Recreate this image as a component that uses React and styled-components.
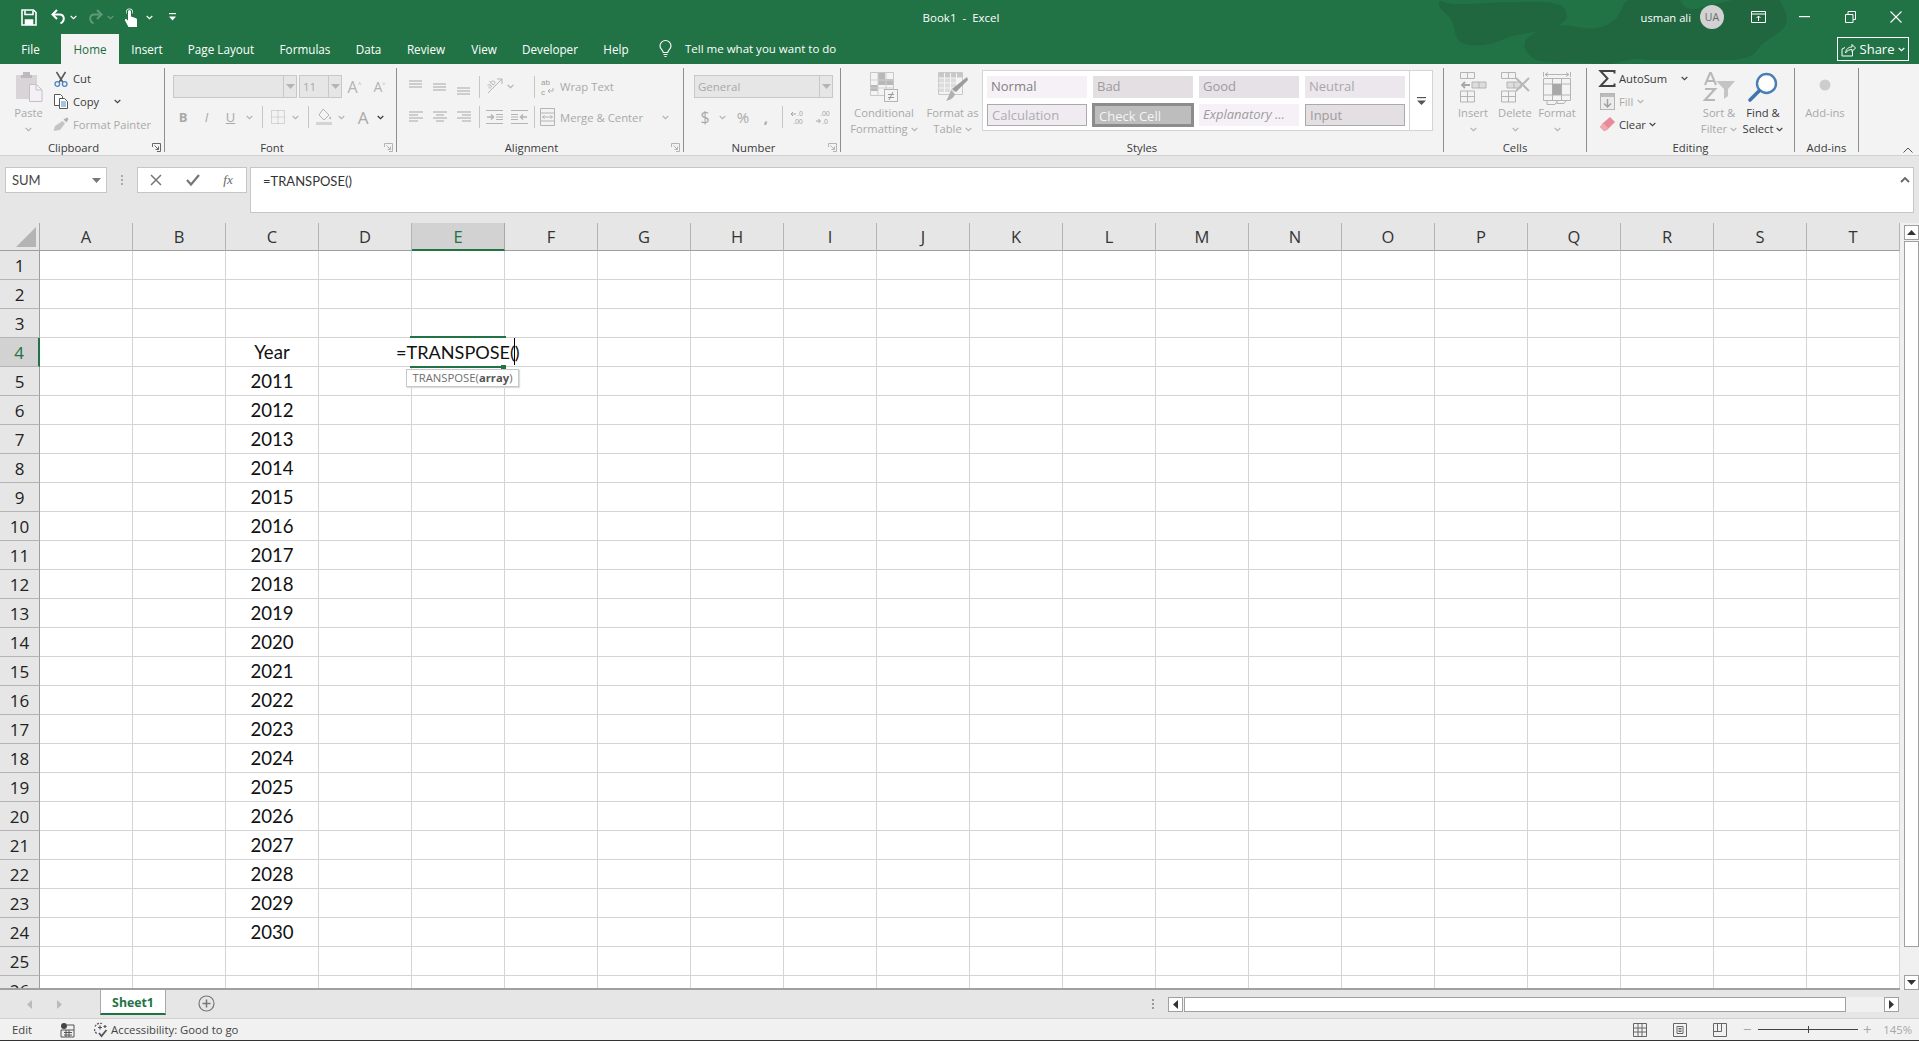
import React from 'react'
import styled, { createGlobalStyle } from 'styled-components'

const GREEN = '#217346'
const DIM = '#b4b4b4'
const DIMTEXT = '#a9a9a9'
const DARK = '#3a3a3a'

const COLUMNS = 'ABCDEFGHIJKLMNOPQRST'.split('')
const ROWS = Array.from({ length: 26 }, (_, i) => i + 1)
const TABS = [
  ['File', 61], ['Home', 58], ['Insert', 56], ['Page Layout', 92], ['Formulas', 76],
  ['Data', 51], ['Review', 64], ['View', 52], ['Developer', 80], ['Help', 52],
]

const cellText = (col, row) => {
  if (col !== 'C') return ''
  if (row === 4) return 'Year'
  if (row >= 5 && row <= 24) return String(2006 + row)
  return ''
}

const Global = createGlobalStyle`
  html, body { margin: 0; padding: 0; background: #fff; }
  * { box-sizing: border-box; }
  body { font-family: "Open Sans", "Noto Sans", sans-serif; overflow: hidden; }
  svg { overflow: visible; }
`

const Window = styled.div`
  width: 1919px;
  height: 1041px;
  display: flex;
  flex-direction: column;
  overflow: hidden;
  background: #e6e6e6;
`

/* title bar + tabs */
const Header = styled.header`
  position: relative;
  height: 64px;
  background: ${GREEN};
  color: #fff;
`
const Blobs = styled.svg`
  position: absolute;
  left: 1430px;
  top: 0;
`
const TitleRow = styled.div`
  position: relative;
  height: 34px;
  display: grid;
  grid-template-columns: 1fr auto 1fr;
  align-items: center;
`
const Quick = styled.div`
  display: flex;
  align-items: center;
  padding-left: 21px;
  height: 100%;
`
const BookName = styled.div`
  font-size: 11.5px;
  padding-left: 3px;
`
const Account = styled.div`
  display: flex;
  align-items: center;
  justify-content: flex-end;
  height: 100%;
`
const UserName = styled.span`
  font-size: 11.2px;
  margin-right: 9px;
`
const Avatar = styled.span`
  width: 24px;
  height: 24px;
  border-radius: 50%;
  background: #d2d2d2;
  color: #6a6a6a;
  font-size: 10.5px;
  display: flex;
  align-items: center;
  justify-content: center;
  margin-right: 11px;
`
const Slot = styled.span`
  display: inline-flex;
  align-items: center;
  justify-content: center;
  flex: none;
  width: ${p => p.$w}px;
  margin-left: ${p => p.$ml || 0}px;
  height: 100%;
  color: ${p => p.$c || DIMTEXT};
  font-size: ${p => p.$fs || 12}px;
  font-weight: ${p => p.$fw || 400};
  font-style: ${p => p.$fi ? 'italic' : 'normal'};
  text-decoration: ${p => p.$u ? 'underline' : 'none'};
`
const TabRow = styled.nav`
  position: relative;
  height: 30px;
  display: flex;
  align-items: stretch;
`
const Tab = styled.a`
  width: ${p => p.$w}px;
  display: flex;
  align-items: center;
  justify-content: center;
  font-size: 11.7px;
  padding-bottom: 1px;
  color: ${p => p.$active ? '#1e6b41' : '#fff'};
  background: ${p => p.$active ? '#f3f3f3' : 'transparent'};
`
const TellMe = styled.div`
  display: flex;
  align-items: center;
  margin-left: 17px;
  gap: 13px;
  font-size: 11.5px;
  padding-bottom: 1px;
`
const ShareButton = styled.button`
  position: absolute;
  right: 10px;
  top: 3px;
  width: 72px;
  height: 24px;
  background: transparent;
  border: 1px solid #fff;
  color: #fff;
  font: 13px "Open Sans", sans-serif;
  display: flex;
  align-items: center;
  justify-content: center;
  gap: 4px;
  padding: 0;
`

/* ribbon */
const Ribbon = styled.div`
  position: relative;
  height: 92px;
  padding-top: 4px;
  background: #f3f3f3;
  border-bottom: 1px solid #d2d2d2;
  display: flex;
`
const Group = styled.section`
  position: relative;
  width: ${p => p.$w}px;
  height: 84px;
  flex: none;
  border-right: 1px solid #8f8f8f;
  display: flex;
  flex-direction: column;
`
const GroupBody = styled.div`
  height: 74px;
  flex: none;
  display: flex;
  flex-direction: ${p => p.$col ? 'column' : 'row'};
  padding-left: ${p => p.$pl || 0}px;
`
const GroupLabel = styled.div`
  height: 10px;
  line-height: 12px;
  text-align: center;
  font-size: 11.3px;
  color: #3a3a3a;
  padding-right: ${p => p.$launcher ? 17 : 0}px;
`
const Launcher = styled.svg`
  position: absolute;
  right: 3px;
  bottom: 0;
`
const LargeButton = styled.div`
  width: ${p => p.$w}px;
  flex: none;
  display: flex;
  flex-direction: column;
  align-items: center;
  padding-top: 4px;
  color: ${p => p.$on ? DARK : DIMTEXT};
  font-size: 11.2px;
`
const LargeIcon = styled.div`
  height: 33px;
  display: flex;
  align-items: flex-start;
  padding-top: ${p => p.$pt || 0}px;
`
const LargeLine = styled.div`
  height: 16px;
  line-height: 16px;
  white-space: nowrap;
  display: flex;
  align-items: center;
  gap: 3px;
`
const SmallStack = styled.div`
  width: ${p => p.$w}px;
  flex: none;
  display: flex;
  flex-direction: column;
  margin-top: -1px;
`
const SmallRow = styled.div`
  height: 23px;
  display: flex;
  align-items: center;
  color: ${p => p.$on ? DARK : DIMTEXT};
  font-size: 11.2px;
`
const SmallIcon = styled.span`
  width: ${p => p.$w || 18}px;
  flex: none;
  display: inline-flex;
  justify-content: center;
  margin-right: 3px;
`
const ToolRow = styled.div`
  height: ${p => p.$h || 23}px;
  margin-top: 7px;
  display: flex;
  align-items: center;
`
const ComboBox = styled.div`
  width: ${p => p.$w}px;
  margin-left: ${p => p.$ml || 0}px;
  height: 23px;
  flex: none;
  background: #e6e6e6;
  border: 1px solid #c8c8c8;
  display: flex;
  align-items: center;
  justify-content: space-between;
  color: ${DIMTEXT};
  font-size: 11.5px;
  padding-left: 3px;
`
const ComboArrow = styled.span`
  width: 13px;
  height: 100%;
  border-left: 1px solid #c8c8c8;
  display: flex;
  align-items: center;
  justify-content: center;
`
const Divider = styled.span`
  display: block;
  width: 1px;
  height: 22px;
  background: #c6c6c6;
`
const ToolText = styled.span`
  font-size: 11.3px;
  color: ${DIMTEXT};
  white-space: nowrap;
`
const Gallery = styled.div`
  width: 451px;
  height: 61px;
  margin-top: 2px;
  flex: none;
  background: #fff;
  border: 1px solid #d4d4d4;
  display: flex;
`
const GalleryGrid = styled.div`
  width: 427px;
  padding: 5px 4px;
  display: grid;
  grid-template-columns: repeat(4, 100px);
  grid-auto-rows: 22px;
  gap: 6px;
  border-right: 1px solid #d4d4d4;
`
const GalleryMore = styled.div`
  flex: 1;
  display: flex;
  align-items: center;
  justify-content: center;
`
const StyleCell = styled.div`
  background: ${p => p.$bg};
  border: ${p => p.$bd || 'none'};
  outline: ${p => p.$ol || 'none'};
  color: ${p => p.$c || '#9c9c9c'};
  font-style: ${p => p.$i ? 'italic' : 'normal'};
  font-size: 13px;
  line-height: 21px;
  padding-left: 4px;
  white-space: nowrap;
  overflow: hidden;
`
const Collapse = styled.svg`
  position: absolute;
  right: 6px;
  bottom: 2px;
`

/* formula bar */
const FormulaBar = styled.div`
  height: 64px;
  padding: 11px 5px 8px 5px;
  display: flex;
  align-items: flex-start;
  background: #e6e6e6;
  flex: none;
`
const NameBox = styled.div`
  width: 102px;
  height: 26px;
  background: #fff;
  border: 1px solid #c6c6c6;
  display: flex;
  align-items: center;
  justify-content: space-between;
  padding: 0 5px 0 6px;
  font: 13px Lato, sans-serif;
  color: #444;
`
const GripDots = styled.span`
  width: 30px;
  height: 26px;
  flex: none;
  display: flex;
  align-items: center;
  justify-content: center;
`
const FxBox = styled.div`
  width: 110px;
  height: 26px;
  background: #fff;
  border: 1px solid #c6c6c6;
  display: flex;
  align-items: center;
  flex: none;
`
const FormulaInput = styled.div`
  width: 1664px;
  height: 46px;
  margin-left: 3px;
  background: #fff;
  border: 1px solid #c6c6c6;
  font: 13px Lato, sans-serif;
  color: #333;
  padding: 5px 12px;
  position: relative;
`
const FormulaCollapse = styled.svg`
  position: absolute;
  right: 3px;
  top: 8px;
`

/* sheet */
const SheetArea = styled.main`
  margin-top: 3px;
  height: 767px;
  flex: none;
  display: flex;
`
const Sheet = styled.div`
  width: 1900px;
  height: 767px;
  overflow: hidden;
  background: #fff;
  border-bottom: 2px solid #a0a0a0;
  display: grid;
  grid-template-columns: 40px repeat(20, 93px);
  grid-template-rows: 28px repeat(26, 29px);
  font-family: Lato, "Liberation Sans", sans-serif;
`
const Corner = styled.div`
  background: #e6e6e6;
  border-right: 1px solid #a8a8a8;
  border-bottom: 1px solid #9e9e9e;
  display: flex;
  align-items: flex-end;
  justify-content: flex-end;
  padding: 0 3px 3px 0;
`
const ColHead = styled.div`
  background: ${p => p.$active ? '#d2d2d2' : '#e6e6e6'};
  color: ${p => p.$active ? GREEN : '#333'};
  border-right: 1px solid ${p => p.$active ? '#a8a8a8' : '#b4b4b4'};
  border-bottom: ${p => p.$active ? `2px solid ${GREEN}` : '1px solid #9e9e9e'};
  font: 16.5px "Open Sans", sans-serif;
  display: flex;
  align-items: center;
  justify-content: center;
`
const RowHead = styled.div`
  background: ${p => p.$active ? '#d2d2d2' : '#e6e6e6'};
  color: ${p => p.$active ? GREEN : '#222'};
  border-right: ${p => p.$active ? `2px solid ${GREEN}` : '1px solid #9e9e9e'};
  border-bottom: 1px solid #b4b4b4;
  font: 17px "Open Sans", sans-serif;
  display: flex;
  align-items: center;
  justify-content: center;
`
const Cell = styled.div`
  position: relative;
  border-right: 1px solid #d4d4d4;
  border-bottom: 1px solid #d4d4d4;
  font-size: 18.6px;
  line-height: 28px;
  text-align: center;
  color: #111;
`
const Editor = styled.div`
  position: absolute;
  z-index: 3;
  left: -16px;
  top: 0;
  width: 128px;
  height: 28px;
  background: #fff;
  font-size: 18.1px;
  text-align: left;
  white-space: nowrap;
  line-height: 28px;
`
const EditorLine = styled.span`
  position: absolute;
  left: 14px;
  width: ${p => p.$w}px;
  height: 2px;
  background: ${GREEN};
  top: ${p => p.$top}px;
`
const FillHandle = styled.span`
  position: absolute;
  left: 105px;
  top: 27px;
  width: 5px;
  height: 4px;
  background: ${GREEN};
`
const Caret = styled.span`
  position: absolute;
  left: 118px;
  top: 0;
  width: 1px;
  height: 27px;
  background: #000;
`
const ArgHint = styled.div`
  position: absolute;
  z-index: 4;
  left: -6px;
  top: 31px;
  width: 113px;
  height: 18px;
  background: #fff;
  border: 1px solid #c8c8c8;
  box-shadow: 1px 1px 1px #ddd;
  font: 11.3px/16px "Open Sans", sans-serif;
  color: #6e6e6e;
  text-align: center;
  white-space: nowrap;
  b { color: #555; }
`
const VScroll = styled.div`
  width: 19px;
  height: 767px;
  display: flex;
  flex-direction: column;
  align-items: center;
  padding: 2px 0 0 3px;
  background: #f0f0f0;
`
const ScrollButton = styled.div`
  width: ${p => p.$w || 15}px;
  height: ${p => p.$h || 15}px;
  background: #fff;
  border: 1px solid #a0a0a0;
  display: flex;
  align-items: center;
  justify-content: center;
  flex: none;
`
const VThumb = styled.div`
  width: 15px;
  height: 706px;
  margin-top: 1px;
  background: #fff;
  border: 1px solid #a0a0a0;
`
const VTrack = styled.div`
  flex: 1;
`

/* tab bar + status bar */
const SheetTabs = styled.div`
  height: 28px;
  flex: none;
  display: flex;
  align-items: flex-start;
  background: #e6e6e6;
`
const NavArrows = styled.div`
  width: 100px;
  height: 28px;
  display: flex;
  align-items: center;
  padding-left: 27px;
  gap: 25px;
`
const SheetTab = styled.div`
  width: 66px;
  height: 25px;
  background: #fff;
  border: 1px solid #a8a8a8;
  border-top: none;
  border-bottom: 2px solid ${GREEN};
  color: ${GREEN};
  font-size: 12.3px;
  font-weight: 700;
  padding-top: 2px;
  display: flex;
  align-items: center;
  justify-content: center;
`
const AddSheet = styled.div`
  margin: 5px 0 0 32px;
  width: 17px;
  height: 17px;
`
const TabSpring = styled.div`
  flex: 1;
  height: 28px;
  display: flex;
  align-items: center;
  justify-content: flex-end;
  padding-right: 14px;
`
const HScroll = styled.div`
  width: 731px;
  height: 15px;
  margin: 7px 20px 0 0;
  flex: none;
  display: flex;
  background: #f0f0f0;
`
const HThumb = styled.div`
  width: 662px;
  margin-left: 1px;
  background: #fff;
  border: 1px solid #a0a0a0;
`
const HTrack = styled.div`
  flex: 1;
`
const StatusBar = styled.footer`
  height: 23px;
  flex: none;
  background: #f1f1f1;
  border-top: 1px solid #d0d0d0;
  border-bottom: 1px solid #333;
  display: flex;
  align-items: center;
  font-size: 11.3px;
  color: #444;
`
const StatusText = styled.span`
  margin-left: ${p => p.$ml}px;
  white-space: nowrap;
`
const StatusIcon = styled.span`
  margin-left: ${p => p.$ml}px;
  display: inline-flex;
  flex: none;
`
const StatusSpring = styled.div`
  flex: 1;
`
const ZoomSlider = styled.div`
  position: relative;
  width: 100px;
  height: 1px;
  margin-left: 4px;
  background: #444;
`
const ZoomTick = styled.span`
  position: absolute;
  left: 50px;
  top: -3px;
  width: 1px;
  height: 7px;
  background: #444;
`
const ZoomSign = styled.span`
  color: #a8a8a8;
  font-size: 15px;
  line-height: 1;
  width: 14px;
  margin-left: ${p => p.$ml || 0}px;
  text-align: center;
`
const ZoomValue = styled.span`
  color: #a8a8a8;
  margin: 0 7px 0 9px;
`

/* small drawings */
const Chev = ({ c = DIM, w = 7 }) => (
  <svg width={w} height="5" viewBox="0 0 7 5" fill="none">
    <path d="M.7 1l2.8 2.6L6.3 1" stroke={c} strokeWidth="1.2" />
  </svg>
)
const Tri = ({ c = '#555', down = true }) => (
  <svg width="9" height="5" viewBox="0 0 9 5">
    <path d={down ? 'M0 0h9L4.5 5z' : 'M0 5h9L4.5 0z'} fill={c} />
  </svg>
)
const Lines = ({ rows, c = DIM }) => (
  <svg width="16" height="16" viewBox="0 0 16 16" stroke={c} strokeWidth="1.2">
    {rows.map(([y, x1, x2], i) => <line key={i} x1={x1} x2={x2} y1={y} y2={y} />)}
  </svg>
)
const LauncherIcon = ({ c = DIM }) => (
  <Launcher width="9" height="9" viewBox="0 0 9 9" fill="none" stroke={c}>
    <path d="M.5 4V.5H8.500V8.500H5M2.500 2.500l4 4M6.500 3.500v3h-3" />
  </Launcher>
)
const Save = () => (
  <svg width="16" height="17" viewBox="0 0 16 17" fill="none" stroke="#fff" strokeWidth="1.6">
    <path d="M1 1h11.500L15 3.500V16H1z" />
    <path d="M4 1.500v4h8v-4" />
    <path d="M4.500 16v-5h7v5" fill="#fff" />
  </svg>
)
const Undo = ({ c = '#fff', flip }) => (
  <svg width="15" height="16" viewBox="0 0 15 16" fill="none" stroke={c} strokeWidth="2">
    <g transform={flip ? 'translate(15 0) scale(-1 1)' : undefined}>
      <path d="M6 1L1.500 5.500 6 10" />
      <path d="M2 5.500h6.500c5 0 6 6 1 9" />
    </g>
  </svg>
)
const TouchHand = () => (
  <svg width="13" height="20" viewBox="0 0 13 20" fill="#fff">
    <path d="M2 5a3.500 3.500 0 0 1 7 0c0 1-.3 1.600-.7 2.200V5a2.800 2.800 0 0 0-5.600 0v2.200C2.300 6.600 2 6 2 5z" />
    <path d="M4 4.500a1.500 1.500 0 0 1 3 0v5l4.500 1.500c1 .4 1.500 1 1.500 2V20H4.500L1 13.500c-.5-1 .8-2 1.800-1l1.200 1.200z" />
  </svg>
)
const Customize = () => (
  <svg width="7" height="8" viewBox="0 0 7 8" fill="#fff">
    <rect x="0" y="0" width="7" height="1.200" />
    <path d="M0 3.500h7L3.500 7.500z" />
  </svg>
)
const Bulb = () => (
  <svg width="13" height="18" viewBox="0 0 13 18" fill="none" stroke="#fff" strokeWidth="1.100">
    <path d="M4.300 12.500C4 10 1 9 1 6a5.500 5.500 0 0 1 11 0c0 3-3 4-3.300 6.500z" />
    <path d="M4.500 14.500h4M5.500 16.500h2" />
  </svg>
)
const ShareIcon = () => (
  <svg width="15" height="15" viewBox="0 0 15 15" fill="none" stroke="#fff">
    <path d="M4 5.500L1 7v7h10.500V9" />
    <path d="M4.500 11C5 7 7.500 5 11 5V2.500L14.500 6 11 9.500V7.500c-2.500 0-5 1-6.500 3.500z" />
  </svg>
)
const RibbonDisplay = () => (
  <svg width="15" height="12" viewBox="0 0 15 12" fill="none" stroke="#fff">
    <path d="M.5.500h14v11H.5zM.5 3h14M7.500 10V5M5.500 7l2-2 2 2" />
  </svg>
)
const Minimize = () => (
  <svg width="11" height="2" viewBox="0 0 11 2"><rect width="11" height="1.200" fill="#fff" /></svg>
)
const Restore = () => (
  <svg width="11" height="12" viewBox="0 0 11 12" fill="none" stroke="#fff">
    <path d="M.5 3.500h7.500v8H.5zM3 3.500v-3h7.500v8H8" />
  </svg>
)
const Close = () => (
  <svg width="12" height="12" viewBox="0 0 12 12" stroke="#fff" strokeWidth="1.100">
    <path d="M.5.500l11 11M11.500.500l-11 11" />
  </svg>
)
const Paste = () => (
  <svg width="28" height="30" viewBox="0 0 28 30">
    <path d="M1 3h21v24H1z" fill="#d8d4d8" />
    <path d="M8 3V0h7v3h2v3H6V3z" fill="#bdbabd" />
    <path d="M14.500 12.500h7l5.500 5.500v11.500H14.500z" fill="#f4f0f6" stroke="#c4c0c4" />
    <path d="M21 12.500V18h6" fill="none" stroke="#c4c0c4" />
  </svg>
)
const Scissors = () => (
  <svg width="14" height="16" viewBox="0 0 14 16" fill="none">
    <path d="M2.500 1l6.200 10M11.500 1L5.300 11" stroke="#555" strokeWidth="1.500" />
    <circle cx="3.300" cy="13" r="2.300" stroke="#4a86c5" strokeWidth="1.300" />
    <circle cx="10.700" cy="13" r="2.300" stroke="#4a86c5" strokeWidth="1.300" />
  </svg>
)
const CopyIcon = () => (
  <svg width="15" height="15" viewBox="0 0 15 15" fill="#fff" stroke="#555">
    <path d="M.5.500h6l2 2v9h-8z" />
    <path d="M5.500 4.500h5l3 3v7h-8z" />
    <path d="M7 8h5M7 10h5M7 12h5" stroke="#4a86c5" />
  </svg>
)
const Painter = () => (
  <svg width="16" height="16" viewBox="0 0 16 16">
    <path d="M9.500 4L12 6.500 7 13 .5 14 2 9z" fill="#c4c4c4" />
    <path d="M10.500 2.500L14 .5l1.500 1.500-2 3.500z" fill="#b0b0b0" />
  </svg>
)
const Orientation = () => (
  <svg width="17" height="17" viewBox="0 0 17 17" fill="none" stroke={DIM}>
    <path d="M2 15L16 1M11 1h5v5" />
    <text x="1" y="9" fontSize="8" fill={DIM} stroke="none" transform="rotate(-45 5 7)">ab</text>
  </svg>
)
const Borders = () => (
  <svg width="14" height="14" viewBox="0 0 14 14" fill="none" stroke={DIM} strokeDasharray="1 1">
    <path d="M.5.500h13v13H.500zM.5 7h13M7 .5v13" />
  </svg>
)
const FillColor = () => (
  <svg width="17" height="18" viewBox="0 0 17 18" fill="none">
    <path d="M7 1l6 6-5 5-5-5z" fill="#f4f4f4" stroke={DIM} />
    <path d="M14 8c1 1.500 1.500 2.300 1 3-.4.500-1.400.4-1.600-.3-.1-.7.200-1.400.6-2.700z" fill={DIM} />
    <rect x="0" y="14" width="16" height="3" fill="#d4d4d4" />
  </svg>
)
const Indent = ({ flip }) => (
  <svg width="17" height="14" viewBox="0 0 17 14" fill="none" stroke={DIM}>
    <g transform={flip ? 'translate(17 0) scale(-1 1)' : undefined}>
      <path d="M0 .5h17M0 13.500h17M10 4.500h7M10 7h7M10 9.500h7" />
      <path d="M1 7h6M5 4.500L7.500 7 5 9.500" strokeWidth="1.500" />
    </g>
  </svg>
)
const WrapIcon = () => (
  <svg width="13" height="18" viewBox="0 0 13 18" fontFamily="Liberation Sans, sans-serif">
    <text x="0" y="7" fontSize="8" fill="#9c9c9c">ab</text>
    <text x="0" y="17" fontSize="8" fill="#9c9c9c">c</text>
    <path d="M12 10v3H7M9 11l-2 2 2 2" stroke={DIM} fill="none" />
  </svg>
)
const Merge = () => (
  <svg width="15" height="18" viewBox="0 0 15 18" fill="none" stroke={DIM}>
    <path d="M.5.500h14v17H.5zM.5 5h14M.5 13h14M2.500 9h10M2.500 9l2-1.500M2.500 9l2 1.500M12.500 9l-2-1.500M12.500 9l-2 1.500" />
  </svg>
)
const DecimalUp = ({ flip }) => (
  <svg width="15" height="15" viewBox="0 0 15 15" fill="none" stroke="#a4a4a4" fontFamily="Liberation Sans, sans-serif">
    {flip ? (
      <>
        <text x="4" y="6" fontSize="7" fill="#a4a4a4" stroke="none">.00</text>
        <path d="M0 11h4M2.500 9l2 2-2 2" />
        <text x="6" y="14" fontSize="7" fill="#a4a4a4" stroke="none">.0</text>
      </>
    ) : (
      <>
        <path d="M1 4h5M3 2L1 4l2 2" />
        <text x="7" y="6" fontSize="7" fill="#a4a4a4" stroke="none">.0</text>
        <text x="3" y="14" fontSize="7" fill="#a4a4a4" stroke="none">.00</text>
      </>
    )}
  </svg>
)
const CondFormat = () => (
  <svg width="28" height="30" viewBox="0 0 28 30">
    <path d="M.5.500h23v23H.500z" fill="#f4f4f4" stroke="#c8c8c8" />
    <path d="M8 1h7v6h8v6H8v6H1v-6h7z" fill="#b8b8b8" />
    <path d="M.5 8h23M.5 16h23M8 1v23M16 1v23" stroke="#cfcfcf" />
    <rect x="14.500" y="17.500" width="13" height="12" fill="#f4f4f4" stroke="#b4b4b4" />
    <path d="M18 22.500h6M18 25.500h6M19 28l4-8" stroke="#999" />
  </svg>
)
const FormatTable = () => (
  <svg width="30" height="30" viewBox="0 0 30 30">
    <path d="M.5.500h24v22H.500z" fill="#f4f4f4" stroke="#c8c8c8" />
    <path d="M1 1h23v5H1z" fill="#c8c8c8" />
    <path d="M1 6h17v14H1z" fill="#dcdcdc" />
    <path d="M.5 6h24M.5 11h24M.5 16h24M6.500 1v21M12.500 1v21M18.500 1v21" stroke="#f4f4f4" />
    <path d="M29 5l1 3-12 12-4-3z" fill="#9c9c9c" />
    <path d="M13 18l4 4c-1 4-5 6-9 7 2-3 3-6 5-11z" fill="#b0b0b0" />
  </svg>
)
const InsertCells = () => (
  <svg width="28" height="31" viewBox="0 0 28 31" fill="none" stroke={DIM}>
    <path d="M1.500.5h14v6h-14zM8.500.5v6M1.500 19h14v11h-14zM1.500 24.500h14M8.500 19v11" />
    <path d="M13 10h14v6H13zM20 10v6" fill="#dcdcdc" />
    <path d="M3 13h8M6 10l-3 3 3 3" strokeWidth="1.800" stroke="#a8a8a8" />
  </svg>
)
const DeleteCells = () => (
  <svg width="30" height="31" viewBox="0 0 30 31" fill="none" stroke={DIM}>
    <path d="M1.500.5h14v6h-14zM8.500.5v6M1.500 19h14v11h-14zM1.500 24.500h14M8.500 19v11" />
    <path d="M7 10h14v6H7zM14 10v6" fill="#dcdcdc" />
    <path d="M16 6l13 13M29 6L16 19" strokeWidth="2" stroke="#b8b8b8" />
  </svg>
)
const FormatCells = () => (
  <svg width="28" height="33" viewBox="0 0 28 33" fill="none" stroke={DIM}>
    <path d="M.5 0v5M27.500 0v5M2 2.500h24M2 2.500l3-2M2 2.500l3 2M26 2.500l-3-2M26 2.500l-3 2" />
    <path d="M.5 6.500h27v22H.5zM.5 12h27M.5 23h27M9.500 6.500v22M18.500 6.500v22" />
    <rect x="9.500" y="12" width="9" height="11" fill="#a8a8a8" stroke="none" />
    <path d="M4 28.500v4h8l2-3M14 28.500v3h7l2-3" />
  </svg>
)
const Sigma = () => (
  <svg width="16" height="17" viewBox="0 0 16 17" fill="none" stroke="#444" strokeWidth="2">
    <path d="M15.500 3.500V1H1.500l7 7.500-7 7.500h14v-2.500" />
  </svg>
)
const FillIcon = () => (
  <svg width="15" height="17" viewBox="0 0 15 17">
    <rect x=".5" y=".5" width="14" height="16" fill="#ececec" stroke={DIM} />
    <rect x="1" y="1" width="13" height="3" fill="#bcbcbc" />
    <path d="M7.500 6v8M4 10.500L7.500 14l3.500-3.500" stroke="#a0a0a0" strokeWidth="1.500" fill="none" />
  </svg>
)
const Eraser = () => (
  <svg width="15" height="15" viewBox="0 0 15 15">
    <path d="M10 0l5 5-8 8-3 1-4-4 3-4z" fill="#e98a98" />
    <path d="M0 10l3-4 5 5-3 3H4z" fill="#f0a8b2" />
  </svg>
)
const SortFilter = () => (
  <svg width="32" height="30" viewBox="0 0 32 30" fill="none">
    <path d="M2 13L7 1h1l5 12M4 9h7" stroke="#b8b8b8" strokeWidth="2" />
    <path d="M2 17h10L2 28h10" stroke="#b8b8b8" strokeWidth="2.200" />
    <path d="M13 9h19l-7 8v7l-4 3V17z" fill="#c4c4c4" />
  </svg>
)
const Magnifier = () => (
  <svg width="30" height="31" viewBox="0 0 30 31" fill="none">
    <circle cx="18.500" cy="11.500" r="9.500" stroke="#4a7fb5" strokeWidth="2.400" fill="#fff" />
    <path d="M11 19L2 28" stroke="#3f75ad" strokeWidth="3.600" strokeLinecap="round" />
  </svg>
)
const AddinsDot = () => (
  <svg width="14" height="14" viewBox="0 0 14 14">
    <circle cx="7" cy="7" r="5.500" fill="#cdcdcd" />
  </svg>
)
const GridView = () => (
  <svg width="14" height="14" viewBox="0 0 14 14" fill="none" stroke="#666">
    <path d="M.5.500h13v13H.500zM.5 5h13M.5 9h13M5 .5v13M9 .5v13" />
  </svg>
)
const PageView = () => (
  <svg width="14" height="14" viewBox="0 0 14 14" fill="none" stroke="#666">
    <path d="M.5.500h13v13H.500zM4 3.500h6v7H4zM5.500 5.500h3M5.500 7h3M5.500 8.500h3" />
  </svg>
)
const BreakView = () => (
  <svg width="14" height="14" viewBox="0 0 14 14" fill="none" stroke="#666">
    <path d="M.5.500h13v13H.500zM.5 8.500h8V.5M4.500.5v8" />
  </svg>
)
const MacroIcon = () => (
  <svg width="13" height="14" viewBox="0 0 13 14">
    <circle cx="3" cy="3" r="3" fill="#444" />
    <path d="M6 2h7v12H0V7h13M3 9.500h8M3 12h8M5 7v7M8 7v7" stroke="#555" fill="none" />
  </svg>
)
const A11yIcon = () => (
  <svg width="16" height="15" viewBox="0 0 16 15" fill="none" stroke="#555" strokeWidth="1.200">
    <path d="M9 1.500A6 6 0 0 0 2 4.500M1.500 7a6 6 0 0 0 3 5" strokeDasharray="2 1" />
    <path d="M5 5.500h4M7 3.500v4M12 3v3M10.500 4.500h3" />
    <path d="M6 11l2.500 3 5-6" strokeWidth="1.800" />
  </svg>
)

const StyleGallery = () => (
  <Gallery>
    <GalleryGrid>
      <StyleCell $bg="#f5f1f7" $c="#7f7f7f">Normal</StyleCell>
      <StyleCell $bg="#e4dfe3">Bad</StyleCell>
      <StyleCell $bg="#e6e1e6">Good</StyleCell>
      <StyleCell $bg="#ece6ed" $c="#a8a8a8">Neutral</StyleCell>
      <StyleCell $bg="#efebf1" $bd="1px solid #aaa" $c="#adadad">Calculation</StyleCell>
      <StyleCell $bg="#bdbdbd" $bd="2px solid #8c8c8c" $ol="1px solid #8c8c8c" $c="#f4f4f4">Check Cell</StyleCell>
      <StyleCell $bg="#f5f1f7" $i>Explanatory ...</StyleCell>
      <StyleCell $bg="#e4dfe3" $bd="1px solid #aaa">Input</StyleCell>
    </GalleryGrid>
    <GalleryMore>
      <svg width="9" height="8" viewBox="0 0 9 8" fill="#555">
        <rect width="9" height="1.200" />
        <path d="M0 3.500h9L4.500 8z" />
      </svg>
    </GalleryMore>
  </Gallery>
)

export default function App() {
  return (
    <Window>
      <Global />
      <Header>
        <Blobs width="400" height="64" viewBox="0 0 400 64">
          <g fill="#206740">
            <path d="M10 0c12 8 38 2 70 2 24 0 38-2 52 4 8 8 6 14-4 20-18 8-42 6-56 14-14 6-30 8-42 2-8-8-4-20-12-26-6-6-12-10-8-16z" />
            <path d="M96 40c8-10 30-16 46-14 16 4 30 4 42-6 10-8 6-18 16-20h50c6 12 16 10 26 6 10-2 18-4 26-6h48c2 8 10 14 6 24-6 12-22 14-30 28-10 10-34 8-52 8h-58c-16-4-30 6-44 4-20-2-50 0-66-4-10-6-14-12-10-20z" />
          </g>
        </Blobs>
        <TitleRow>
          <Quick>
            <Save />
            <Slot $w={16} $ml={13}><Undo /></Slot>
            <Slot $w={8} $ml={3}><Chev c="#fff" /></Slot>
            <Slot $w={16} $ml={10}><Undo c="#5f9a7c" flip /></Slot>
            <Slot $w={8} $ml={3}><Chev c="#5f9a7c" /></Slot>
            <Slot $w={14} $ml={9}><TouchHand /></Slot>
            <Slot $w={8} $ml={8}><Chev c="#fff" /></Slot>
            <Slot $w={8} $ml={15}><Customize /></Slot>
          </Quick>
          <BookName>Book1&nbsp; -&nbsp; Excel</BookName>
          <Account>
            <UserName>usman ali</UserName>
            <Avatar>UA</Avatar>
            <Slot $w={46}><RibbonDisplay /></Slot>
            <Slot $w={46}><Minimize /></Slot>
            <Slot $w={46}><Restore /></Slot>
            <Slot $w={46}><Close /></Slot>
          </Account>
        </TitleRow>
        <TabRow>
          {TABS.map(([name, w]) => (
            <Tab key={name} $w={w} $active={name === 'Home'}>{name}</Tab>
          ))}
          <TellMe>
            <Bulb />
            <span>Tell me what you want to do</span>
          </TellMe>
          <ShareButton>
            <ShareIcon />
            Share
            <Chev c="#fff" />
          </ShareButton>
        </TabRow>
      </Header>

      <Ribbon>
        <Group $w={165}>
          <GroupBody $pl={5}>
            <LargeButton $w={47}>
              <LargeIcon><Paste /></LargeIcon>
              <LargeLine>Paste</LargeLine>
              <LargeLine><Chev /></LargeLine>
            </LargeButton>
            <SmallStack $w={108}>
              <SmallRow $on><SmallIcon><Scissors /></SmallIcon>Cut</SmallRow>
              <SmallRow $on>
                <SmallIcon><CopyIcon /></SmallIcon>Copy
                <Slot $w={10} $ml={13}><Chev c="#444" /></Slot>
              </SmallRow>
              <SmallRow><SmallIcon><Painter /></SmallIcon>Format Painter</SmallRow>
            </SmallStack>
          </GroupBody>
          <GroupLabel $launcher>Clipboard</GroupLabel>
          <LauncherIcon c="#666" />
        </Group>

        <Group $w={232}>
          <GroupBody $col $pl={7}>
            <ToolRow>
              <ComboBox $w={124} $ml={1}><span /><ComboArrow><Tri c={DIM} /></ComboArrow></ComboBox>
              <ComboBox $w={43} $ml={2}>11<ComboArrow><Tri c={DIM} /></ComboArrow></ComboBox>
              <Slot $w={25} $fs={16} $c={DIM}>A<sup>˄</sup></Slot>
              <Slot $w={25} $fs={14} $c={DIM}>A<sup>˅</sup></Slot>
            </ToolRow>
            <ToolRow $h={24}>
              <Slot $w={22} $fs={13} $fw={700}>B</Slot>
              <Slot $w={25} $fs={13} $fi>I</Slot>
              <Slot $w={23} $fs={13} $u>U</Slot>
              <Slot $w={14}><Chev /></Slot>
              <Slot $w={12}><Divider /></Slot>
              <Slot $w={20}><Borders /></Slot>
              <Slot $w={14}><Chev /></Slot>
              <Slot $w={12}><Divider /></Slot>
              <Slot $w={21}><FillColor /></Slot>
              <Slot $w={12}><Chev /></Slot>
              <Slot $w={22} $ml={5} $fs={17}>A</Slot>
              <Slot $w={12}><Chev c="#333" /></Slot>
            </ToolRow>
          </GroupBody>
          <GroupLabel $launcher>Font</GroupLabel>
          <LauncherIcon />
        </Group>

        <Group $w={287}>
          <GroupBody $col $pl={7}>
            <ToolRow>
              <Slot $w={24}><Lines rows={[[2, 1, 14], [5, 1, 14], [8, 1, 14]]} /></Slot>
              <Slot $w={24}><Lines rows={[[5, 1, 14], [8, 1, 14], [11, 1, 14]]} /></Slot>
              <Slot $w={24}><Lines rows={[[9, 1, 14], [12, 1, 14], [15, 1, 14]]} /></Slot>
              <Slot $w={6}><Divider /></Slot>
              <Slot $w={25}><Orientation /></Slot>
              <Slot $w={6}><Chev /></Slot>
              <Slot $w={21} />
              <Slot $w={1}><Divider /></Slot>
              <Slot $w={25}><WrapIcon /></Slot>
              <ToolText>Wrap Text</ToolText>
            </ToolRow>
            <ToolRow $h={24}>
              <Slot $w={24}><Lines rows={[[3, 1, 15], [6, 1, 10], [9, 1, 15], [12, 1, 10]]} /></Slot>
              <Slot $w={24}><Lines rows={[[3, 1, 15], [6, 4, 12], [9, 1, 15], [12, 4, 12]]} /></Slot>
              <Slot $w={24}><Lines rows={[[3, 1, 15], [6, 6, 15], [9, 1, 15], [12, 6, 15]]} /></Slot>
              <Slot $w={6}><Divider /></Slot>
              <Slot $w={25}><Indent /></Slot>
              <Slot $w={24}><Indent flip /></Slot>
              <Slot $w={3} />
              <Slot $w={1}><Divider /></Slot>
              <Slot $w={25}><Merge /></Slot>
              <ToolText>Merge &amp; Center</ToolText>
              <Slot $w={10} $ml={17}><Chev /></Slot>
            </ToolRow>
          </GroupBody>
          <GroupLabel $launcher>Alignment</GroupLabel>
          <LauncherIcon />
        </Group>

        <Group $w={157}>
          <GroupBody $col $pl={10}>
            <ToolRow>
              <ComboBox $w={139}>General<ComboArrow><Tri c={DIM} /></ComboArrow></ComboBox>
            </ToolRow>
            <ToolRow $h={24}>
              <Slot $w={22} $fs={16}>$</Slot>
              <Slot $w={12}><Chev /></Slot>
              <Slot $w={30} $fs={15}>%</Slot>
              <Slot $w={16} $fs={15} $fw={700}>,</Slot>
              <Slot $w={16}><Divider /></Slot>
              <Slot $w={14}><DecimalUp /></Slot>
              <Slot $w={26} $ml={6}><DecimalUp flip /></Slot>
            </ToolRow>
          </GroupBody>
          <GroupLabel $launcher>Number</GroupLabel>
          <LauncherIcon />
        </Group>

        <Group $w={603}>
          <GroupBody $pl={4}>
            <LargeButton $w={78}>
              <LargeIcon><CondFormat /></LargeIcon>
              <LargeLine>Conditional</LargeLine>
              <LargeLine>Formatting <Chev /></LargeLine>
            </LargeButton>
            <LargeButton $w={59}>
              <LargeIcon><FormatTable /></LargeIcon>
              <LargeLine>Format as</LargeLine>
              <LargeLine>Table <Chev /></LargeLine>
            </LargeButton>
            <StyleGallery />
          </GroupBody>
          <GroupLabel>Styles</GroupLabel>
        </Group>

        <Group $w={143}>
          <GroupBody $pl={8}>
            <LargeButton $w={42}>
              <LargeIcon><InsertCells /></LargeIcon>
              <LargeLine>Insert</LargeLine>
              <LargeLine><Chev /></LargeLine>
            </LargeButton>
            <LargeButton $w={42}>
              <LargeIcon><DeleteCells /></LargeIcon>
              <LargeLine>Delete</LargeLine>
              <LargeLine><Chev /></LargeLine>
            </LargeButton>
            <LargeButton $w={42}>
              <LargeIcon><FormatCells /></LargeIcon>
              <LargeLine>Format</LargeLine>
              <LargeLine><Chev /></LargeLine>
            </LargeButton>
          </GroupBody>
          <GroupLabel>Cells</GroupLabel>
        </Group>

        <Group $w={208}>
          <GroupBody $pl={11}>
            <SmallStack $w={97}>
              <SmallRow $on>
                <SmallIcon><Sigma /></SmallIcon>AutoSum
                <Slot $w={10} $ml={12}><Chev c="#444" /></Slot>
              </SmallRow>
              <SmallRow><SmallIcon><FillIcon /></SmallIcon>Fill<Slot $w={10} $ml={2}><Chev /></Slot></SmallRow>
              <SmallRow $on><SmallIcon><Eraser /></SmallIcon>Clear<Slot $w={10} $ml={2}><Chev c="#444" /></Slot></SmallRow>
            </SmallStack>
            <LargeButton $w={48}>
              <LargeIcon><SortFilter /></LargeIcon>
              <LargeLine>Sort &amp;</LargeLine>
              <LargeLine>Filter <Chev /></LargeLine>
            </LargeButton>
            <LargeButton $w={40} $on>
              <LargeIcon><Magnifier /></LargeIcon>
              <LargeLine>Find &amp;</LargeLine>
              <LargeLine>Select <Chev c="#444" /></LargeLine>
            </LargeButton>
          </GroupBody>
          <GroupLabel>Editing</GroupLabel>
        </Group>

        <Group $w={64}>
          <GroupBody>
            <LargeButton $w={60}>
              <LargeIcon $pt={6}><AddinsDot /></LargeIcon>
              <LargeLine>Add-ins</LargeLine>
            </LargeButton>
          </GroupBody>
          <GroupLabel>Add-ins</GroupLabel>
        </Group>

        <Collapse width="10" height="6" viewBox="0 0 10 6" fill="none" stroke="#555">
          <path d="M.5 5.500L5 1l4.500 4.500" />
        </Collapse>
      </Ribbon>

      <FormulaBar>
        <NameBox>SUM<Tri c="#777" /></NameBox>
        <GripDots>
          <svg width="2" height="10" viewBox="0 0 2 10" fill="#aaa">
            <rect width="2" height="2" /><rect y="4" width="2" height="2" /><rect y="8" width="2" height="2" />
          </svg>
        </GripDots>
        <FxBox>
          <Slot $w={36}>
            <svg width="12" height="12" viewBox="0 0 12 12" stroke="#777" strokeWidth="1.500"><path d="M1 1l10 10M11 1L1 11" /></svg>
          </Slot>
          <Slot $w={37}>
            <svg width="14" height="12" viewBox="0 0 14 12" fill="none" stroke="#777" strokeWidth="2.200"><path d="M1 6l4 4.500L13 1" /></svg>
          </Slot>
          <Slot $w={34} $c="#666" $fs={13} $fi>
            <span style={{ fontFamily: '"Liberation Serif", serif' }}>fx</span>
          </Slot>
        </FxBox>
        <FormulaInput>
          =TRANSPOSE()
          <FormulaCollapse width="10" height="7" viewBox="0 0 10 7" fill="none" stroke="#666" strokeWidth="1.800">
            <path d="M1 6l4-4 4 4" />
          </FormulaCollapse>
        </FormulaInput>
      </FormulaBar>

      <SheetArea>
        <Sheet>
          <Corner>
            <svg width="20" height="20" viewBox="0 0 20 20"><path d="M20 0v20H0z" fill="#b4b4b4" /></svg>
          </Corner>
          {COLUMNS.map(col => <ColHead key={col} $active={col === 'E'}>{col}</ColHead>)}
          {ROWS.map(row => (
            <React.Fragment key={row}>
              <RowHead $active={row === 4}>{row}</RowHead>
              {COLUMNS.map(col => (
                <Cell key={col}>
                  {cellText(col, row)}
                  {col === 'E' && row === 4 && (
                    <>
                      <Editor>
                        =TRANSPOSE()
                        <EditorLine $top={-2} $w={96} />
                        <EditorLine $top={28} $w={91} />
                        <FillHandle />
                        <Caret />
                      </Editor>
                      <ArgHint>TRANSPOSE(<b>array</b>)</ArgHint>
                    </>
                  )}
                </Cell>
              ))}
            </React.Fragment>
          ))}
        </Sheet>
        <VScroll>
          <ScrollButton><Tri c="#333" down={false} /></ScrollButton>
          <VThumb />
          <VTrack />
          <ScrollButton><Tri c="#333" /></ScrollButton>
        </VScroll>
      </SheetArea>

      <SheetTabs>
        <NavArrows>
          <svg width="5" height="9" viewBox="0 0 5 9" fill="#bbb"><path d="M5 0v9L0 4.500z" /></svg>
          <svg width="5" height="9" viewBox="0 0 5 9" fill="#bbb"><path d="M0 0v9l5-4.500z" /></svg>
        </NavArrows>
        <SheetTab>Sheet1</SheetTab>
        <AddSheet>
          <svg width="17" height="17" viewBox="0 0 17 17" fill="none" stroke="#777">
            <circle cx="8.500" cy="8.500" r="7.500" strokeWidth="1.200" />
            <path d="M4.500 8.500h8M8.500 4.500v8" strokeWidth="1.500" />
          </svg>
        </AddSheet>
        <TabSpring>
          <svg width="2" height="10" viewBox="0 0 2 10" fill="#999">
            <rect width="2" height="2" /><rect y="4" width="2" height="2" /><rect y="8" width="2" height="2" />
          </svg>
        </TabSpring>
        <HScroll>
          <ScrollButton>
            <svg width="5" height="9" viewBox="0 0 5 9" fill="#333"><path d="M5 0v9L0 4.500z" /></svg>
          </ScrollButton>
          <HThumb />
          <HTrack />
          <ScrollButton>
            <svg width="5" height="9" viewBox="0 0 5 9" fill="#333"><path d="M0 0v9l5-4.500z" /></svg>
          </ScrollButton>
        </HScroll>
      </SheetTabs>

      <StatusBar>
        <StatusText $ml={12}>Edit</StatusText>
        <StatusIcon $ml={29}><MacroIcon /></StatusIcon>
        <StatusIcon $ml={19}><A11yIcon /></StatusIcon>
        <StatusText $ml={2}>Accessibility: Good to go</StatusText>
        <StatusSpring />
        <StatusIcon $ml={0}><GridView /></StatusIcon>
        <StatusIcon $ml={26}><PageView /></StatusIcon>
        <StatusIcon $ml={26}><BreakView /></StatusIcon>
        <ZoomSign $ml={13}>−</ZoomSign>
        <ZoomSlider><ZoomTick /></ZoomSlider>
        <ZoomSign $ml={2}>+</ZoomSign>
        <ZoomValue>145%</ZoomValue>
      </StatusBar>
    </Window>
  )
}
